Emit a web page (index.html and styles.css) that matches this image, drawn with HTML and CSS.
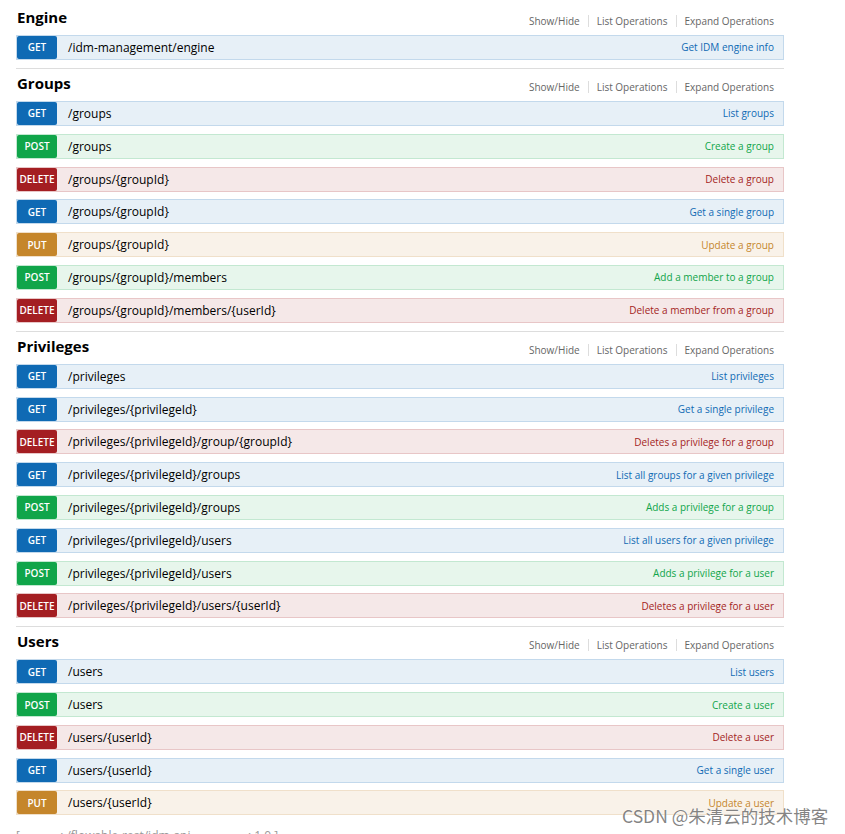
FILE: index.html
```html
<!DOCTYPE html>
<html lang="en">
<head>
<meta charset="utf-8">
<title>IDM REST API</title>
<link rel="stylesheet" href="styles.css">
</head>
<body>
<div class="page">
  <section class="resource first">
    <div class="res-head">
      <h2 class="res-title">Engine</h2>
      <ul class="res-links"><li>Show/Hide</li><li>List Operations</li><li>Expand Operations</li></ul>
    </div>
    <div class="op get"><span class="verb">GET</span><span class="path">/idm-management/engine</span><span class="summary">Get IDM engine info</span></div>
  </section>

  <section class="resource">
    <div class="res-head">
      <h2 class="res-title">Groups</h2>
      <ul class="res-links"><li>Show/Hide</li><li>List Operations</li><li>Expand Operations</li></ul>
    </div>
    <div class="op get"><span class="verb">GET</span><span class="path">/groups</span><span class="summary">List groups</span></div>
    <div class="op post"><span class="verb">POST</span><span class="path">/groups</span><span class="summary">Create a group</span></div>
    <div class="op delete"><span class="verb">DELETE</span><span class="path">/groups/{groupId}</span><span class="summary">Delete a group</span></div>
    <div class="op get"><span class="verb">GET</span><span class="path">/groups/{groupId}</span><span class="summary">Get a single group</span></div>
    <div class="op put"><span class="verb">PUT</span><span class="path">/groups/{groupId}</span><span class="summary">Update a group</span></div>
    <div class="op post"><span class="verb">POST</span><span class="path">/groups/{groupId}/members</span><span class="summary">Add a member to a group</span></div>
    <div class="op delete"><span class="verb">DELETE</span><span class="path">/groups/{groupId}/members/{userId}</span><span class="summary">Delete a member from a group</span></div>
  </section>

  <section class="resource">
    <div class="res-head">
      <h2 class="res-title">Privileges</h2>
      <ul class="res-links"><li>Show/Hide</li><li>List Operations</li><li>Expand Operations</li></ul>
    </div>
    <div class="op get"><span class="verb">GET</span><span class="path">/privileges</span><span class="summary">List privileges</span></div>
    <div class="op get"><span class="verb">GET</span><span class="path">/privileges/{privilegeId}</span><span class="summary">Get a single privilege</span></div>
    <div class="op delete"><span class="verb">DELETE</span><span class="path">/privileges/{privilegeId}/group/{groupId}</span><span class="summary">Deletes a privilege for a group</span></div>
    <div class="op get"><span class="verb">GET</span><span class="path">/privileges/{privilegeId}/groups</span><span class="summary">List all groups for a given privilege</span></div>
    <div class="op post"><span class="verb">POST</span><span class="path">/privileges/{privilegeId}/groups</span><span class="summary">Adds a privilege for a group</span></div>
    <div class="op get"><span class="verb">GET</span><span class="path">/privileges/{privilegeId}/users</span><span class="summary">List all users for a given privilege</span></div>
    <div class="op post"><span class="verb">POST</span><span class="path">/privileges/{privilegeId}/users</span><span class="summary">Adds a privilege for a user</span></div>
    <div class="op delete"><span class="verb">DELETE</span><span class="path">/privileges/{privilegeId}/users/{userId}</span><span class="summary">Deletes a privilege for a user</span></div>
  </section>

  <section class="resource">
    <div class="res-head">
      <h2 class="res-title">Users</h2>
      <ul class="res-links"><li>Show/Hide</li><li>List Operations</li><li>Expand Operations</li></ul>
    </div>
    <div class="op get"><span class="verb">GET</span><span class="path">/users</span><span class="summary">List users</span></div>
    <div class="op post"><span class="verb">POST</span><span class="path">/users</span><span class="summary">Create a user</span></div>
    <div class="op delete"><span class="verb">DELETE</span><span class="path">/users/{userId}</span><span class="summary">Delete a user</span></div>
    <div class="op get"><span class="verb">GET</span><span class="path">/users/{userId}</span><span class="summary">Get a single user</span></div>
    <div class="op put"><span class="verb">PUT</span><span class="path">/users/{userId}</span><span class="summary">Update a user</span></div>
  </section>

  <div class="footer">[ <span class="sc">base url</span>: /flowable-rest/idm-api , <span class="sc">api version</span>: 1.0 ]</div>
</div>
<div class="watermark">CSDN @朱清云的技术博客</div>
</body>
</html>
```

FILE: styles.css
```css
html, body {
  margin: 0;
  padding: 0;
  background: #fff;
}

body {
  font-family: "Open Sans", "Noto Sans", "Liberation Sans", sans-serif;
  color: #000;
  overflow: hidden;
}

.page {
  width: 768px;
  margin-left: 16px;
  padding-top: 1.8px;
}

.resource {
  border-top: 1px solid #dddddd;
}

.resource.first {
  border-top-color: transparent;
}

.res-head {
  display: flex;
  align-items: flex-end;
  justify-content: space-between;
  padding: 4.2px 10px 0 1px;
  margin-bottom: 8px;
}

.res-title {
  margin: 0;
  font-size: 15px;
  line-height: 20px;
  font-weight: 700;
  color: #000;
}

.res-links {
  display: flex;
  list-style: none;
  margin: 0;
  padding: 0;
  font-size: 10px;
  line-height: 12px;
  color: #666;
}

.res-links li {
  padding: 0 8px;
  border-left: 1px solid #dddddd;
}

.res-links li:first-child {
  border-left: none;
}

.res-links li:last-child {
  padding-right: 0;
}

.op {
  display: flex;
  align-items: center;
  height: 25px;
  box-sizing: border-box;
  border: 1px solid;
  margin-bottom: 7.8px;
  padding-right: 9px;
}

.verb {
  width: 40px;
  align-self: stretch;
  display: flex;
  align-items: center;
  justify-content: center;
  color: #fff;
  font-size: 10px;
  font-weight: 600;
  border-radius: 2px;
  flex: none;
}

.path {
  margin-left: 11px;
  font-size: 12px;
  flex: 1;
  white-space: nowrap;
}

.summary {
  font-size: 10px;
  white-space: nowrap;
}

.get { background: #e7f0f7; border-color: #c3d9ec; }
.get .verb { background: #0f6ab4; }
.get .summary { color: #0f6ab4; }

.post { background: #e7f6ec; border-color: #c3e8d1; }
.post .verb { background: #10a54a; }
.post .summary { color: #10a54a; }

.delete { background: #f5e8e8; border-color: #e8c6c7; }
.delete .verb { background: #a41e22; }
.delete .summary { color: #a41e22; }

.put { background: #f9f2e9; border-color: #f0e0ca; }
.put .verb { background: #c5862b; }
.put .summary { color: #c5862b; }

.footer {
  margin-top: 13px;
  font-size: 12px;
  line-height: 16px;
  font-weight: 400;
  color: #999;
}

.footer .sc {
  font-variant: small-caps;
}

.watermark {
  position: absolute;
  left: 622px;
  top: 804px;
  font-family: "Noto Sans CJK SC", "Noto Sans", sans-serif;
  font-size: 17.5px;
  line-height: 24px;
  color: rgba(110, 110, 110, 0.85);
  white-space: nowrap;
  text-shadow: 0 0 2px #fff;
}
```
